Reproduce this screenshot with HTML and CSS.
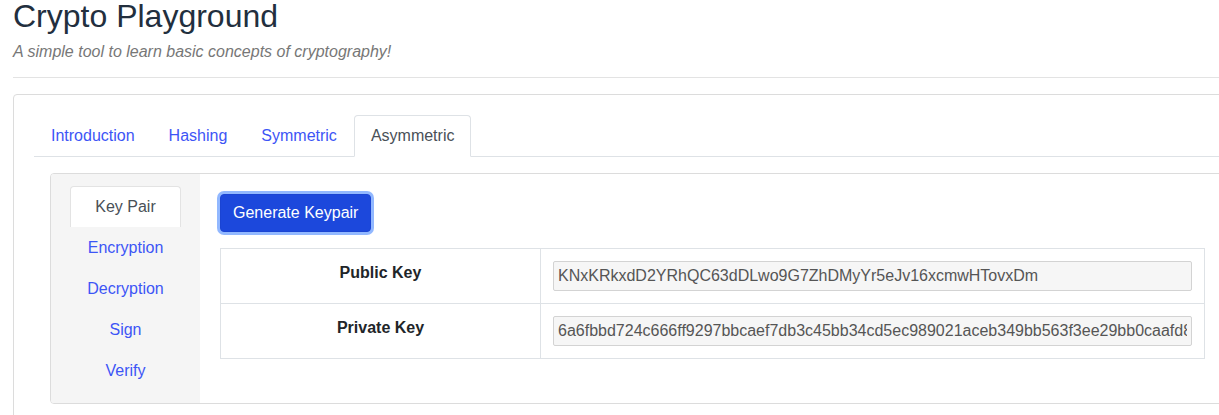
FILE: index.html
```html
<!DOCTYPE html>
<html lang="en">
<head>
<meta charset="utf-8">
<title>Crypto Playground</title>
<link rel="stylesheet" href="styles.css">
</head>
<body>
<div class="page">
  <header class="header">
    <h1 class="title">Crypto Playground</h1>
    <p class="subtitle">A simple tool to learn basic concepts of cryptography!</p>
  </header>
  <hr class="rule">
  <div class="box">
    <ul class="tabs">
      <li><a class="tab" href="#">Introduction</a></li>
      <li><a class="tab" href="#">Hashing</a></li>
      <li><a class="tab" href="#">Symmetric</a></li>
      <li><a class="tab active" href="#">Asymmetric</a></li>
    </ul>
    <div class="tab-content">
      <div class="panel">
        <ul class="side">
          <li><a class="side-link active" href="#">Key Pair</a></li>
          <li><a class="side-link" href="#">Encryption</a></li>
          <li><a class="side-link" href="#">Decryption</a></li>
          <li><a class="side-link" href="#">Sign</a></li>
          <li><a class="side-link" href="#">Verify</a></li>
        </ul>
        <div class="main">
          <button class="btn" type="button">Generate Keypair</button>
          <table class="keys">
            <tr>
              <th>Public Key</th>
              <td><input class="field" type="text" readonly value="KNxKRkxdD2YRhQC63dDLwo9G7ZhDMyYr5eJv16xcmwHTovxDm"></td>
            </tr>
            <tr>
              <th>Private Key</th>
              <td><input class="field" type="text" readonly value="6a6fbbd724c666ff9297bbcaef7db3c45bb34cd5ec989021aceb349bb563f3ee29bb0caafd8e14"></td>
            </tr>
          </table>
        </div>
      </div>
    </div>
  </div>
</div>
</body>
</html>
```

FILE: styles.css
```css
html, body {
  margin: 0;
  padding: 0;
  overflow: hidden;
  background: #fff;
}
body {
  font-family: "Liberation Sans", Arial, sans-serif;
  font-size: 16px;
  line-height: 1.5;
  color: #212529;
}
.page {
  width: 1249px;
  padding-left: 13px;
}
.title {
  margin: 0;
  font-size: 32px;
  line-height: 32px;
  font-weight: 400;
  color: #222f3e;
}
.subtitle {
  margin: 8px 0 0;
  font-style: italic;
  color: #777;
  line-height: 24px;
}
.rule {
  margin: 13px 0 16px;
  border: 0;
  border-top: 1px solid #e3e3e3;
}
.box {
  border: 1px solid #dcdcdc;
  border-radius: 4px;
  padding: 20px;
  min-height: 400px;
}
.tabs {
  list-style: none;
  margin: 0;
  padding: 0;
  display: flex;
  border-bottom: 1px solid #dee2e6;
}
.tabs li {
  margin-bottom: -1px;
}
.tab {
  display: block;
  padding: 8px 16px;
  border: 1px solid transparent;
  border-top-left-radius: 4px;
  border-top-right-radius: 4px;
  color: #3d55f6;
  text-decoration: none;
}
.tab.active {
  color: #495057;
  background: #fff;
  border-color: #dee2e6 #dee2e6 #fff;
}
.tab-content {
  padding: 16px;
}
.panel {
  display: flex;
  border: 1px solid #dcdcdc;
  border-radius: 4px;
  overflow: hidden;
}
.side {
  list-style: none;
  margin: 0;
  padding: 12px 19px 12px 19px;
  width: 111px;
  flex: none;
  background: #f5f5f5;
}
.side-link {
  display: block;
  padding: 8px 0;
  text-align: center;
  color: #3d55f6;
  text-decoration: none;
  border: 1px solid transparent;
  border-bottom: 0;
  border-top-left-radius: 4px;
  border-top-right-radius: 4px;
}
.side-link.active {
  background: #fff;
  color: #495057;
  border-color: #e3e3e3;
}
.main {
  flex: 1;
  padding: 19px 20px 20px;
}
.btn {
  font-family: inherit;
  font-size: 16px;
  line-height: 24px;
  padding: 6px 12px;
  color: #fff;
  background: #1c48dc;
  border: 1px solid #1a44d3;
  border-radius: 4px;
  box-shadow: 0 0 0 3px rgba(110, 160, 255, 0.75);
  margin-top: 1px;
}
.keys {
  margin-top: 16px;
  width: 985px;
  border-collapse: collapse;
}
.keys th,
.keys td {
  border: 1px solid #dee2e6;
  padding: 12px;
  vertical-align: top;
  height: 30px;
}
.keys th {
  width: 295px;
  text-align: center;
  font-weight: 700;
  line-height: 24px;
}
.field {
  box-sizing: border-box;
  display: block;
  width: 100%;
  height: 30px;
  padding: 2px 4px;
  font-family: inherit;
  font-size: 16px;
  color: #555;
  background: #f6f6f6;
  border: 1px solid #d3d3d3;
  border-radius: 2px;
  outline: none;
}
```
